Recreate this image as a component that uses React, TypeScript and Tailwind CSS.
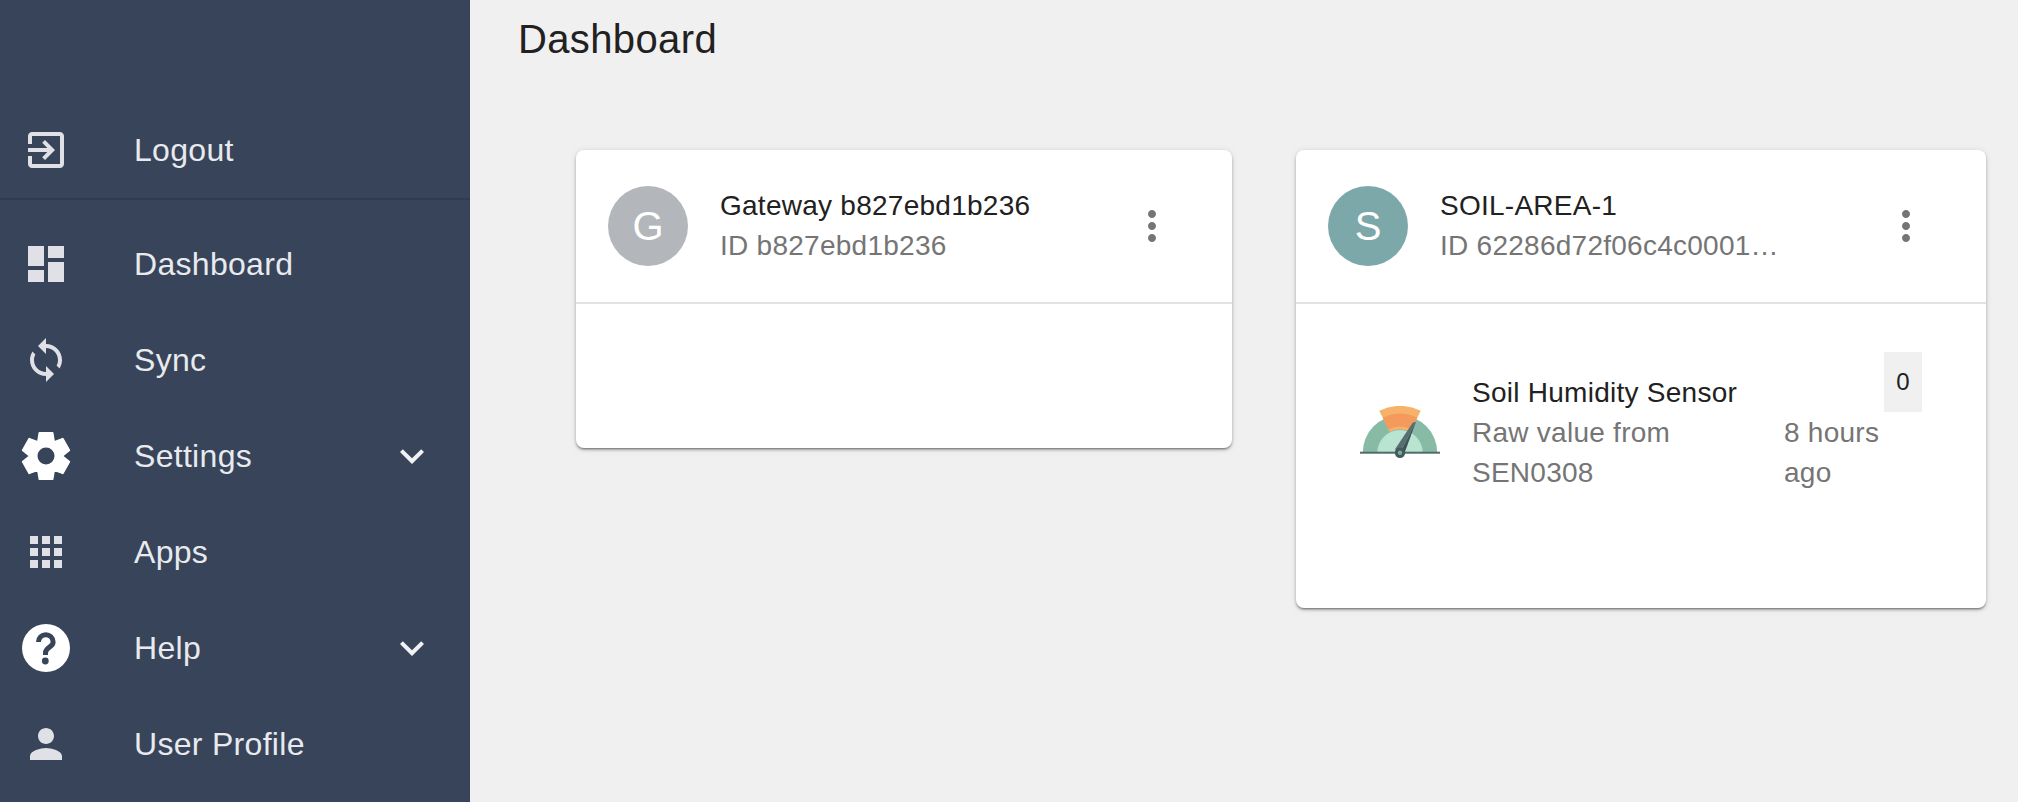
import React from "react";

const paths = {
  logout:
    "M10.09 15.59L11.5 17l5-5-5-5-1.41 1.41L12.67 11H3v2h9.67l-2.58 2.59zM19 3H5c-1.11 0-2 .9-2 2v4h2V5h14v14H5v-4H3v4c0 1.1.89 2 2 2h14c1.1 0 2-.9 2-2V5c0-1.1-.9-2-2-2z",
  dashboard: "M3 13h8V3H3v10zm0 8h8v-6H3v6zm10 0h8V11h-8v10zm0-18v6h8V3h-8z",
  sync: "M12 4V1L8 5l4 4V6c3.31 0 6 2.69 6 6 0 1.01-.25 1.97-.7 2.8l1.46 1.46C19.54 15.03 20 13.57 20 12c0-4.42-3.58-8-8-8zm0 14c-3.31 0-6-2.69-6-6 0-1.01.25-1.97.7-2.8L5.24 7.74C4.46 8.97 4 10.43 4 12c0 4.42 3.58 8 8 8v3l4-4-4-4v3z",
  apps: "M4 8h4V4H4v4zm6 12h4v-4h-4v4zm-6 0h4v-4H4v4zm0-6h4v-4H4v4zm6 0h4v-4h-4v4zm6-10v4h4V4h-4zm-6 4h4V4h-4v4zm6 6h4v-4h-4v4zm0 6h4v-4h-4v4z",
  person:
    "M12 12c2.21 0 4-1.79 4-4s-1.79-4-4-4-4 1.79-4 4 1.79 4 4 4zm0 2c-2.67 0-8 1.34-8 4v2h16v-2c0-2.66-5.33-4-8-4z",
  expand: "M16.59 8.59L12 13.17 7.41 8.59 6 10l6 6 6-6z",
  more: "M12 8c1.1 0 2-.9 2-2s-.9-2-2-2-2 .9-2 2 .9 2 2 2zm0 2c-1.1 0-2 .9-2 2s.9 2 2 2 2-.9 2-2-.9-2-2-2zm0 6c-1.1 0-2 .9-2 2s.9 2 2 2 2-.9 2-2-.9-2-2-2z",
};

const Icon: React.FC<{ d: string; className: string }> = ({ d, className }) => (
  <svg viewBox="0 0 24 24" fill="currentColor" className={className}>
    <path d={d} />
  </svg>
);

// blunt six-lobed gear, not the material one
const GearIcon: React.FC = () => (
  <svg viewBox="0 0 48 48" className="h-12 w-12 overflow-visible">
    <path
      fillRule="evenodd"
      fill="#fff"
      stroke="#fff"
      strokeWidth="2"
      strokeLinejoin="round"
      d="M17.5 1H30.5L32 10.14L40.67 6.87L47.17 18.13L40 24L47.17 29.87L40.67 41.13L32 37.86L30.5 47H17.5L16 37.86L7.33 41.13L.83 29.87L8 24L.83 18.13L7.33 6.87L16 10.14zM24 14.5a9.5 9.5 0 1 0 0 19a9.5 9.5 0 1 0 0-19z"
    />
  </svg>
);

const HelpIcon: React.FC = () => (
  <svg viewBox="0 0 48 48" className="h-12 w-12">
    <circle cx="24" cy="24" r="24" fill="#fff" />
    <path
      d="M16.5 18a7.3 7.3 0 0 1 14.6 0c0 2.2-1.2 3.5-3 4.7-2.6 1.7-4.6 3.2-4.6 6.3v2"
      fill="none"
      stroke="#374459"
      strokeWidth="5"
    />
    <circle cx="23.3" cy="37" r="3.4" fill="#374459" />
  </svg>
);

const NavItem: React.FC<{
  icon: React.ReactNode;
  label: string;
  expand?: boolean;
}> = ({ icon, label, expand }) => (
  <div className="flex h-24 items-center">
    <div className="flex w-[92px] shrink-0 justify-center">{icon}</div>
    <span className="ml-[42px] text-[32px] tracking-[0.3px] text-[#e8eaee]">{label}</span>
    {expand && (
      <Icon d={paths.expand} className="ml-auto mr-[34px] h-12 w-12 text-[#f1f2f4]" />
    )}
  </div>
);

const navIcon = "h-12 w-12 text-[#dfe1e6]";

const Gauge: React.FC = () => (
  <svg viewBox="0 0 80 56" className="h-14 w-20">
    <path d="M2.7 46.7a37.3 37.3 0 0 1 74.6 0z" fill="#88bba6" />
    <path d="M17.3 46.7a22.7 22.7 0 0 1 45.4 0z" fill="#b9e4d2" />
    <path d="M19.3 4.7a46.7 46.7 0 0 1 41.4 0L50.35 25.7a23.4 23.4 0 0 0-20.7 0z" fill="#f6b26b" />
    <path d="M22.7 11.7a39 39 0 0 1 34.6 0L51.5 23.4a26 26 0 0 0-23 0z" fill="#f39a5c" />
    <rect x="0" y="45.7" width="80" height="2" fill="#4f6b6b" />
    <path d="M52.7 16.7L56 15.7L40 46.7L35 43.3z" fill="#55706f" />
    <path d="M56 15.7L45 45.7L40 46.7z" fill="#3f5457" />
    <circle cx="40" cy="46.7" r="5.2" fill="#46595c" />
    <circle cx="40" cy="46.7" r="2.2" fill="#6fb39b" />
  </svg>
);

const Card: React.FC<{
  letter: string;
  color: string;
  title: string;
  id: string;
  width: string;
  children: React.ReactNode;
}> = ({ letter, color, title, id, width, children }) => (
  <div
    className={`${width} self-start rounded-lg bg-white shadow-[0_2px_2px_-1px_rgba(0,0,0,0.35),0_2px_3px_0_rgba(0,0,0,0.2),0_1px_6px_0_rgba(0,0,0,0.12)]`}
  >
    <div className="flex h-[154px] items-center border-b-2 border-[#e2e2e2] pl-8">
      <div
        className={`${color} flex h-20 w-20 shrink-0 items-center justify-center rounded-full text-[40px] text-white`}
      >
        {letter}
      </div>
      <div className="ml-8 min-w-0 text-[28px] leading-10 tracking-[0.26px] whitespace-nowrap">
        <div className="text-[#212121]">{title}</div>
        <div className="text-[#757575]">{id}</div>
      </div>
      <Icon d={paths.more} className="ml-auto mr-[56px] h-12 w-12 text-[#757575]" />
    </div>
    {children}
  </div>
);

const App: React.FC = () => {
  return (
    <div className="flex h-[802px] overflow-hidden bg-[#f0f0f0] font-['Liberation_Sans',Arial,sans-serif]">
      {/* Sidebar */}
      <aside className="w-[470px] shrink-0 bg-[#374459] pt-[102px]">
        <div className="border-b-2 border-[#2f3b4e]">
          <NavItem icon={<Icon d={paths.logout} className={navIcon} />} label="Logout" />
        </div>
        <div className="pt-4">
          <NavItem icon={<Icon d={paths.dashboard} className={navIcon} />} label="Dashboard" />
          <NavItem icon={<Icon d={paths.sync} className={navIcon} />} label="Sync" />
          <NavItem icon={<GearIcon />} label="Settings" expand />
          <NavItem icon={<Icon d={paths.apps} className={navIcon} />} label="Apps" />
          <NavItem icon={<HelpIcon />} label="Help" expand />
          <NavItem icon={<Icon d={paths.person} className={navIcon} />} label="User Profile" />
        </div>
      </aside>

      {/* Main */}
      <main className="min-w-0 flex-1">
        <h1 className="ml-[48px] mt-4 h-[46px] text-[40px] leading-[46px] tracking-[0.37px] text-[#212121]">
          Dashboard
        </h1>
        <div className="ml-[106px] mt-[88px] flex gap-16">
          <Card
            letter="G"
            color="bg-[#b3b6ba]"
            title="Gateway b827ebd1b236"
            id="ID b827ebd1b236"
            width="w-[656px]"
          >
            <div className="h-[144px]" />
          </Card>
          <Card
            letter="S"
            color="bg-[#7ca8aa]"
            title="SOIL-AREA-1"
            id="ID 62286d72f06c4c0001…"
            width="w-[690px]"
          >
            <div className="flex h-[304px] items-start pl-16 pt-12">
              <div className="mt-[54px] shrink-0">
                <Gauge />
              </div>
              <div className="ml-8 mt-[21px] w-[312px] shrink-0 text-[28px] leading-10 tracking-[0.26px]">
                <div className="text-[#212121]">Soil Humidity Sensor</div>
                <div className="w-[240px] text-[#757575]">Raw value from SEN0308</div>
              </div>
              <div className="mt-[61px] w-[100px] shrink-0 text-[28px] leading-10 tracking-[0.26px] text-[#757575]">
                8 hours ago
              </div>
              <div className="flex h-[60px] w-[38px] shrink-0 justify-center bg-[#f0f0f0] pt-4 text-2xl leading-7 text-[#212121]">
                0
              </div>
            </div>
          </Card>
        </div>
      </main>
    </div>
  );
};

export default App;
